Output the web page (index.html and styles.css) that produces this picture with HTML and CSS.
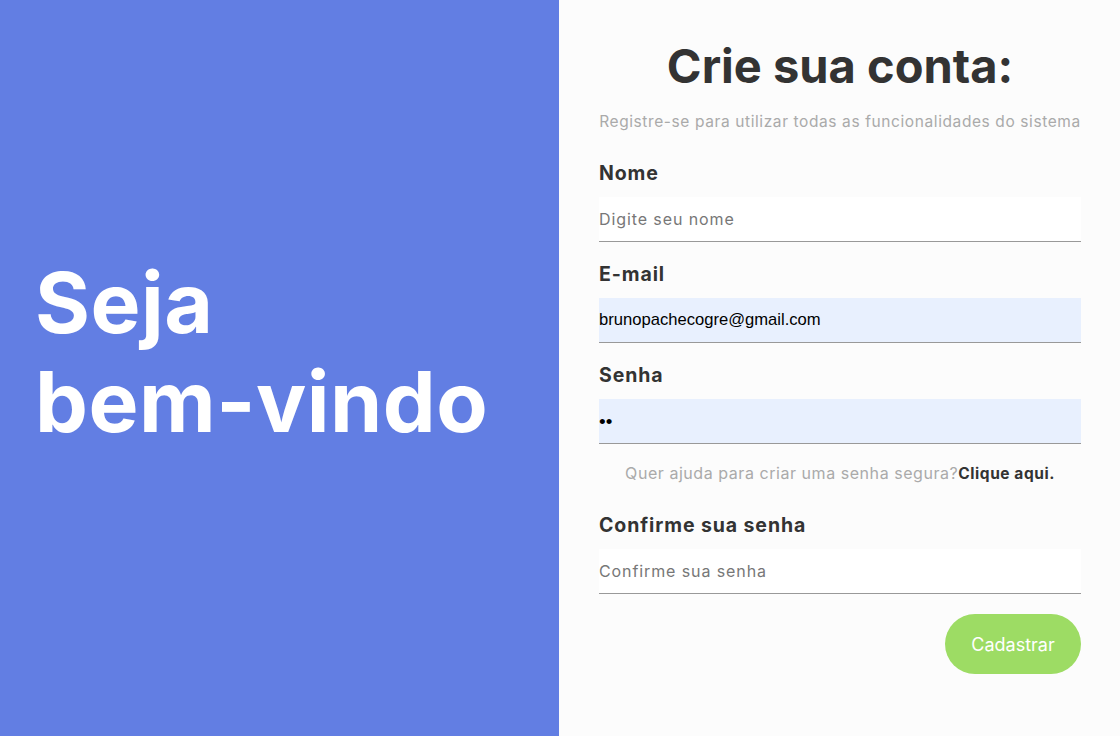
FILE: index.html
```html
<!DOCTYPE html>
<html lang="pt-BR">
<head>
<meta charset="utf-8">
<title>Cadastro</title>
<link rel="stylesheet" href="styles.css">
</head>
<body>
<main class="page">
  <section class="welcome">
    <h2 class="welcome-title">Seja<br>bem-vindo</h2>
  </section>
  <section class="form-panel">
    <h1 class="title">Crie sua conta:</h1>
    <p class="subtitle">Registre-se para utilizar todas as funcionalidades do sistema</p>
    <form class="form">
      <div class="field">
        <label class="label">Nome</label>
        <div class="input"><span class="placeholder">Digite seu nome</span></div>
      </div>
      <div class="field">
        <label class="label">E-mail</label>
        <div class="input autofill"><span class="value">brunopachecogre@gmail.com</span></div>
      </div>
      <div class="field">
        <label class="label">Senha</label>
        <div class="input autofill"><span class="dots">••</span></div>
      </div>
      <p class="help">Quer ajuda para criar uma senha segura?<strong>Clique aqui.</strong></p>
      <div class="field">
        <label class="label">Confirme sua senha</label>
        <div class="input"><span class="placeholder">Confirme sua senha</span></div>
      </div>
      <div class="actions">
        <button type="button" class="btn">Cadastrar</button>
      </div>
    </form>
  </section>
</main>
</body>
</html>
```
FILE: styles.css
```css
* { box-sizing: border-box; }
html, body { margin: 0; padding: 0; }
body {
  font-family: Inter, "Open Sans", sans-serif;
  width: 1120px;
  height: 736px;
  overflow: hidden;
}
.page {
  display: flex;
  height: 736px;
}
.welcome {
  width: 559px;
  background: #627ee3;
  display: flex;
  align-items: center;
  padding: 0 0 32px 35px;
}
.welcome-title {
  margin: 0;
  color: #fff;
  font-size: 84px;
  line-height: 99px;
  font-weight: 700;
  letter-spacing: 0.5px;
}
.form-panel {
  flex: 1;
  background: #fcfcfc;
  padding: 37px 39px 0 40px;
  display: flex;
  flex-direction: column;
}
.title {
  margin: 0;
  text-align: center;
  font-size: 47px;
  line-height: 58px;
  font-weight: 700;
  color: #333;
}
.subtitle {
  margin: 15px 0 0;
  font-size: 15.5px;
  line-height: 24px;
  color: #aaa;
  text-align: center;
  white-space: nowrap;
  letter-spacing: 0.6px;
}
.form {
  margin-top: 27px;
  display: flex;
  flex-direction: column;
}
.field {
  display: flex;
  flex-direction: column;
  margin-bottom: 20px;
}
.label {
  font-size: 19.5px;
  line-height: 24px;
  font-weight: 700;
  color: #333;
  margin-bottom: 12px;
  letter-spacing: 0.9px;
}
.input {
  height: 45px;
  background: #fff;
  border-bottom: 1px solid #999;
  display: flex;
  align-items: center;
}
.input.autofill { background: #e8f0fe; }
.placeholder {
  font-size: 16px;
  color: #777;
  letter-spacing: 0.9px;
}
.value {
  font-family: "Liberation Sans", Arial, sans-serif;
  font-size: 16.6px;
  color: #000;
}
.dots {
  font-family: "Liberation Sans", Arial, sans-serif;
  font-size: 19px;
  line-height: 1;
  color: #000;
}
.help {
  margin: -3px 0 27px;
  text-align: center;
  font-size: 16px;
  line-height: 24px;
  color: #aaa;
  letter-spacing: 0.55px;
}
.help strong {
  color: #333;
  font-weight: 700;
  font-size: 15.5px;
}
.actions {
  display: flex;
  justify-content: flex-end;
}
.btn {
  width: 136px;
  height: 60px;
  border: none;
  border-radius: 30px;
  background: #9ddc64;
  color: #fff;
  font-family: Inter, "Open Sans", sans-serif;
  font-size: 18px;
}
```
